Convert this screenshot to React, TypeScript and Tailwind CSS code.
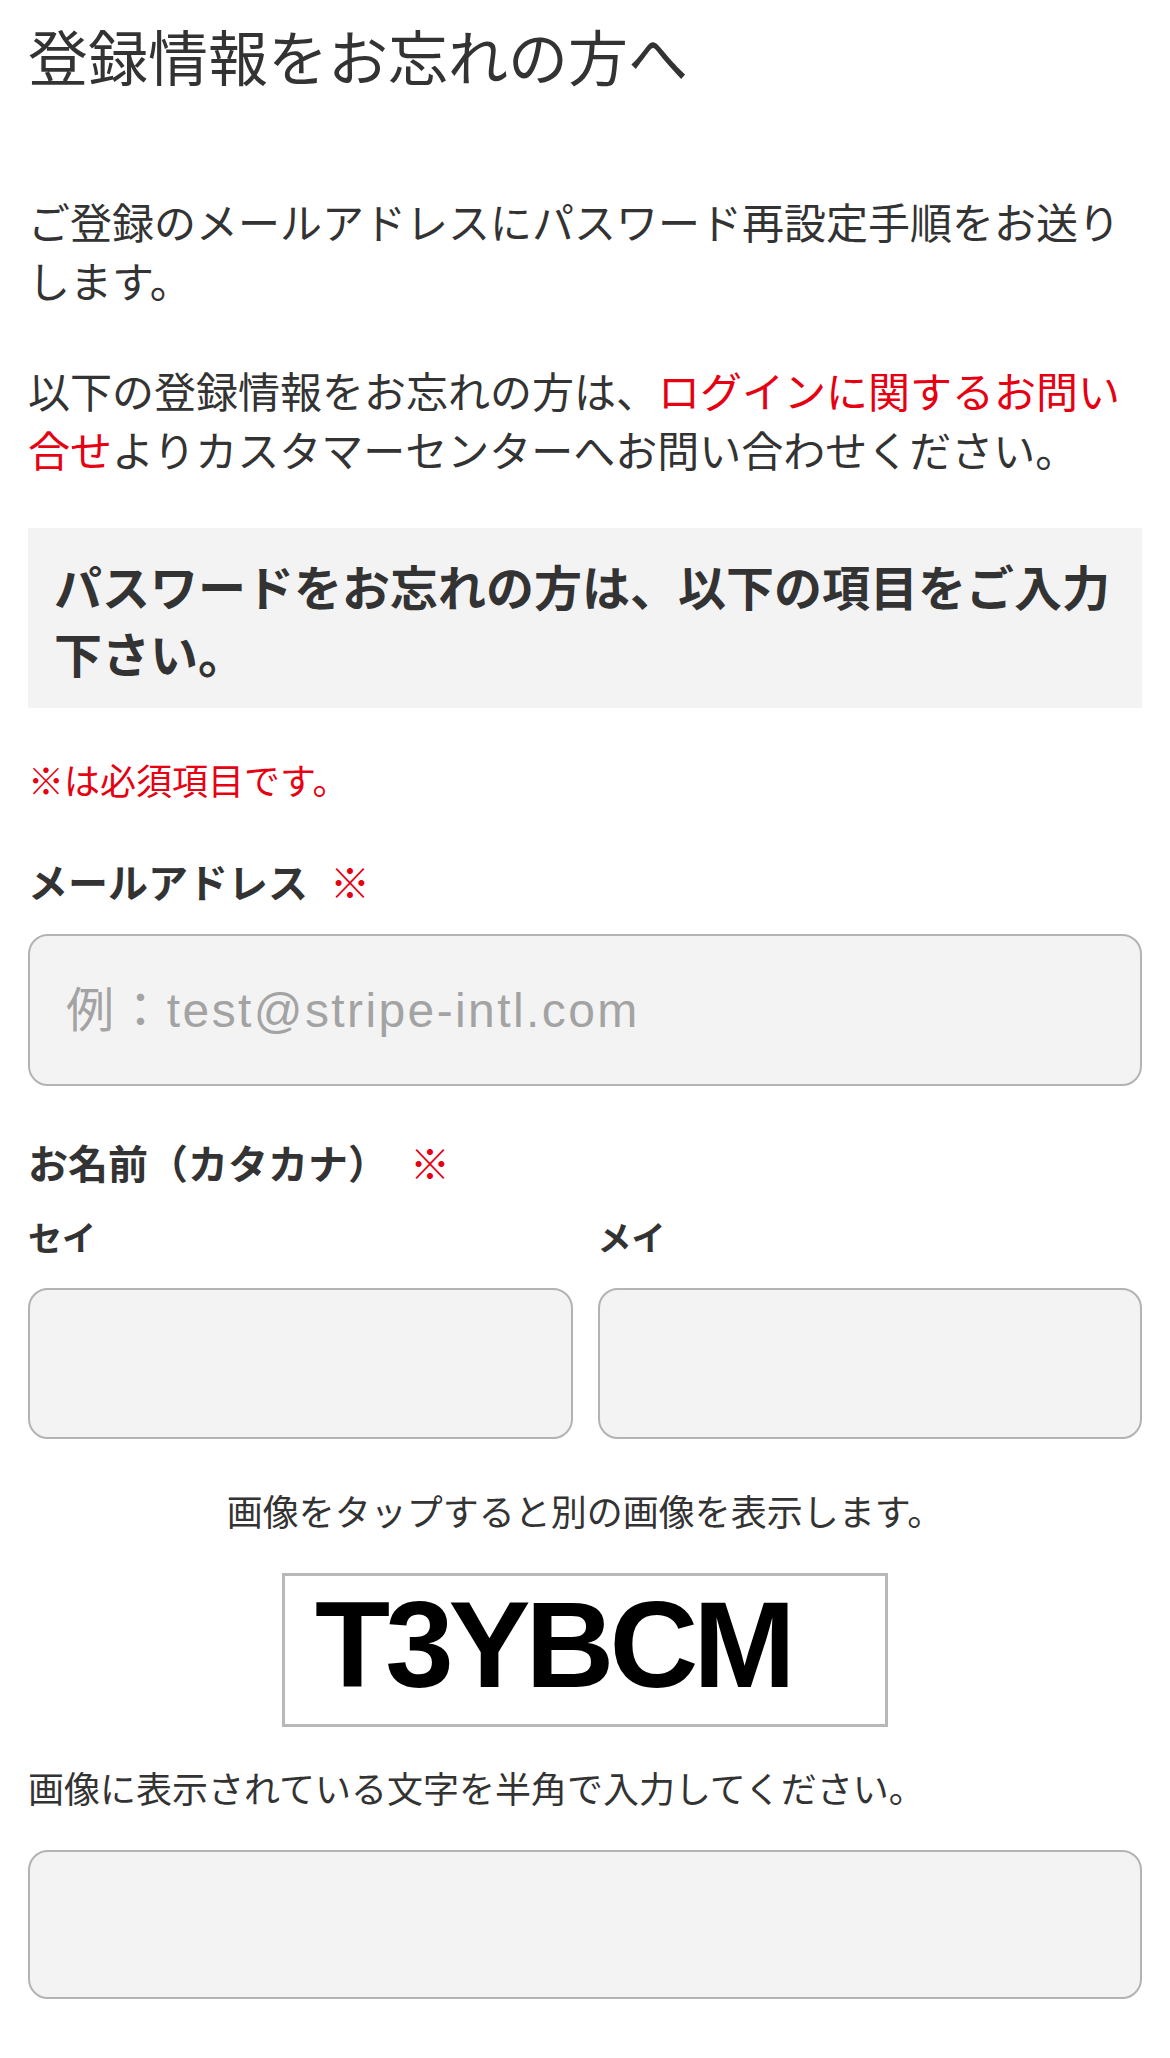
const jp = "font-['Noto_Sans_CJK_JP','Noto_Sans',sans-serif]";

function Required() {
  return <span className="ml-[22px] font-normal text-[#e60012]">※</span>;
}

function Field({ placeholder, className = "" }: { placeholder?: string; className?: string }) {
  return (
    <input
      type="text"
      placeholder={placeholder}
      className={
        "block w-full rounded-[20px] border-2 border-[#b3b3b3] bg-[#f3f3f3] px-[36px] text-[48px] tracking-[0.05em] text-[#333] outline-none placeholder:text-[#a3a3a3] font-['Liberation_Sans','Noto_Sans_CJK_JP',sans-serif] " +
        className
      }
    />
  );
}

export default function App() {
  return (
    <div className={`min-h-[2058px] bg-white px-[28px] pt-[16px] text-[#333] ${jp}`}>
      <h1 className="text-[60px] font-normal leading-[77px]">登録情報をお忘れの方へ</h1>

      <p className="mt-[98px] text-[42px] leading-[59px]">
        ご登録のメールアドレスにパスワード再設定手順をお送りします。
      </p>
      <p className="mt-[51px] text-[42px] leading-[59px]">
        以下の登録情報をお忘れの方は、
        <a href="#" className="text-[#e60012]">
          ログインに関するお問い合せ
        </a>
        よりカスタマーセンターへお問い合わせください。
      </p>

      <div className="mt-[50px] bg-[#f3f3f3] px-[26px] pt-[24px] pb-[22px]">
        <h2 className="text-[48px] font-bold leading-[67px]">
          パスワードをお忘れの方は、以下の項目をご入力下さい。
        </h2>
      </div>

      <p className="mt-[46px] text-[36px] leading-[50px] text-[#e60012]">※は必須項目です。</p>

      <form onSubmit={(e) => e.preventDefault()}>
        <label className="mt-[49px] block text-[40px] font-bold leading-[56px]">
          メールアドレス
          <Required />
        </label>
        <Field placeholder="例：test@stripe-intl.com" className="mt-[25px] h-[152px]" />

        <div className="mt-[48px] text-[40px] font-bold leading-[56px]">
          お名前（カタカナ）
          <Required />
        </div>
        <div className="mt-[25px] grid grid-cols-2 gap-x-[25px]">
          <div>
            <label className="block text-[34px] font-bold leading-[44px]">セイ</label>
            <Field className="mt-[29px] h-[151px]" />
          </div>
          <div>
            <label className="block text-[34px] font-bold leading-[44px]">メイ</label>
            <Field className="mt-[29px] h-[151px]" />
          </div>
        </div>

        <p className="mt-[46px] text-center text-[36px] leading-[50px]">
          画像をタップすると別の画像を表示します。
        </p>
        <div className="mt-[38px] flex justify-center">
          <button
            type="button"
            className="h-[154px] w-[606px] border-[3px] border-[#b8b8b8] bg-white pb-[12px] pl-[30px] text-left"
          >
            <span className="block text-[123px] font-bold leading-[123px] tracking-[-5px] text-black font-['Liberation_Sans',sans-serif]">
              T3YBCM
            </span>
          </button>
        </div>

        <p className="mt-[35px] text-[36px] leading-[50px]">
          画像に表示されている文字を半角で入力してください。
        </p>
        <Field className="mt-[38px] h-[149px]" />
      </form>
    </div>
  );
}
